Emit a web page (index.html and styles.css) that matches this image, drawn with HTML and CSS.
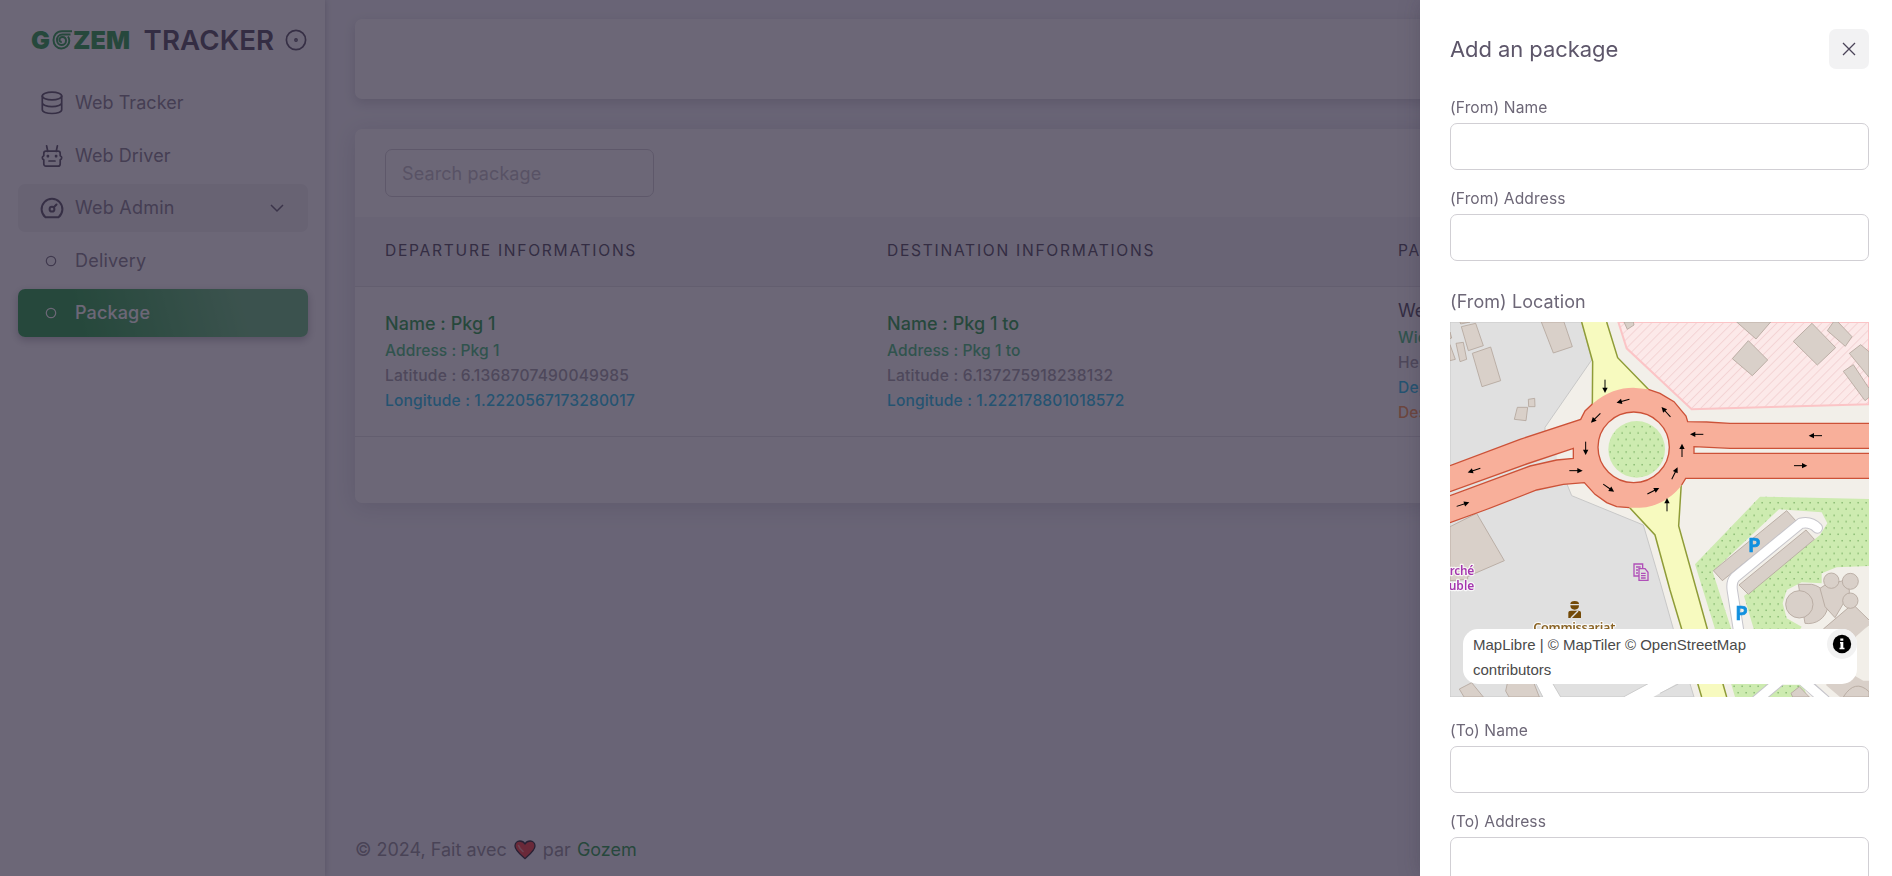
FILE: index.html
```html
<!DOCTYPE html>
<html lang="en">
<head>
<meta charset="utf-8">
<title>Gozem Tracker</title>
<link rel="stylesheet" href="styles.css">
</head>
<body>
<div class="app">
  <aside class="sidebar">
    <div class="brand">
      <svg class="brand-logo" width="104" height="40" viewBox="-2 -10 104 40">
        <g fill="#16983a" font-family="Inter, sans-serif" font-weight="900" font-size="25">
          <text x="0" y="18.6" textLength="19" lengthAdjust="spacingAndGlyphs">G</text>
          <text x="42" y="18.6" textLength="57" lengthAdjust="spacingAndGlyphs">ZEM</text>
        </g>
        <g fill="none" stroke="#16983a" stroke-width="2">
          <path d="M41 1.2H31C25.500 1.200 22.500 5.500 22.500 10c0 5 3.500 8.500 7.800 8.500s8-3.200 8-7.800c0-1.500-.4-3-1.300-4.200"/>
          <path d="M39.500 4.600H31.500c-3.500 0-5.500 2.700-5.500 5.400 0 2.900 2 5 4.500 5s4.500-1.900 4.500-4.300-1.700-3.700-3.600-3.700-3 1.400-2.900 3 1.300 2 2.300 1.700"/>
        </g>
      </svg>
      <span class="brand-text">TRACKER</span>
      <svg class="brand-pin" width="22" height="22" viewBox="0 0 22 22" fill="none" stroke="#4b4458"><circle cx="11" cy="11" r="9.600" stroke-width="1.700"/><circle cx="11" cy="11" r="1.200" stroke-width="1.400"/></svg>
    </div>
    <nav class="menu">
      <a class="item">
        <svg class="icon" viewBox="0 0 22 24"><ellipse cx="11" cy="5" rx="9.700" ry="3.800"/><path d="M1.300 5v13.800c0 2.100 4.300 3.700 9.700 3.700s9.700-1.600 9.700-3.700V5M1.300 11.800c0 2.200 4.300 3.900 9.700 3.900s9.700-1.700 9.700-3.900"/></svg>
        <span>Web Tracker</span>
      </a>
      <a class="item">
        <svg class="icon" viewBox="0 0 22 24"><path d="M6.800 7.500 5.600 1.800M15.200 7.500l1.200-5.700M5 7.200h12c1.400 0 2.200.9 2.200 2.200v2.400c1 .4 1.500 1.100 1.500 2s-.5 1.800-1.500 2.100v3.800c0 1.500-.8 2.500-2.200 2.500H5c-1.400 0-2.200-1-2.200-2.500v-3.800c-1-.3-1.500-1.200-1.500-2.100s.5-1.600 1.500-2V9.400c0-1.300.8-2.200 2.200-2.200zM8 17h6"/><path d="M6.300 11.500h1.200v1.200H6.300zM14.500 11.500h1.200v1.200h-1.200z" stroke-width="1.400"/></svg>
        <span>Web Driver</span>
      </a>
      <a class="item open">
        <svg class="icon gauge" viewBox="0 0 22 24"><path d="M4.500 21.300a10.400 10.400 0 1 1 13 0z"/><circle cx="11" cy="13.200" r="2.400"/><path d="M12.800 11.300l2.700-2.800"/></svg>
        <span class="wide">Web Admin</span>
        <svg class="chev" width="14" height="9" viewBox="0 0 14 9"><path d="M1 1l6 6 6-6"/></svg>
      </a>
      <a class="item">
        <svg class="dot" viewBox="0 0 12 12"><circle cx="6" cy="6" r="4.700"/></svg>
        <span class="wide">Delivery</span>
      </a>
      <a class="item active">
        <svg class="dot" viewBox="0 0 12 12"><circle cx="6" cy="6" r="4.700"/></svg>
        <span>Package</span>
      </a>
    </nav>
  </aside>

  <main class="main">
    <section class="card blank"></section>
    <section class="card list">
      <div class="toolbar"><input class="search" placeholder="Search package"></div>
      <div class="row head">
        <div>DEPARTURE INFORMATIONS</div>
        <div>DESTINATION INFORMATIONS</div>
        <div>PACKAGE INFORMATIONS</div>
      </div>
      <div class="row body">
        <div class="cell">
          <div class="name">Name : Pkg 1</div>
          <div class="line green">Address : Pkg 1</div>
          <div class="line grey">Latitude : 6.1368707490049985</div>
          <div class="line cyan">Longitude : 1.2220567173280017</div>
        </div>
        <div class="cell">
          <div class="name">Name : Pkg 1 to</div>
          <div class="line green">Address : Pkg 1 to</div>
          <div class="line grey">Latitude : 6.137275918238132</div>
          <div class="line cyan">Longitude : 1.222178801018572</div>
        </div>
        <div class="cell">
          <div class="name plain">Weight</div>
          <div class="line green">Width</div>
          <div class="line grey">Height</div>
          <div class="line cyan">Depth</div>
          <div class="line orange">Description</div>
        </div>
      </div>
    </section>
    <footer class="footer">
      <span>© 2024, Fait avec</span>
      <svg class="heart" width="22" height="20" viewBox="0 0 22 20"><path d="M11 18.600C7 15 1 10.500 1 6c0-3 2.200-5 4.800-5C8 1 10 2.300 11 4c1-1.700 3-3 5.200-3C18.800 1 21 3 21 6c0 4.500-6 9-10 12.600z" fill="#f8312f" stroke="#1a1320" stroke-width="1.300"/><path d="M4.500 5.500c.8 2.300 2.500 4.300 4.500 6" fill="none" stroke="#ff8b8b" stroke-width="1.600" stroke-linecap="round"/></svg>
      <span>par</span>
      <a class="link">Gozem</a>
    </footer>
  </main>
</div>

<div class="backdrop"></div>

<section class="drawer">
  <header class="drawer-head">
    <h5>Add an package</h5>
    <button class="close"><svg width="14" height="14" viewBox="0 0 14 14"><path d="M1 1l12 12M13 1L1 13"/></svg></button>
  </header>
  <div class="field"><label>(From) Name</label><input></div>
  <div class="field"><label>(From) Address</label><input></div>
  <div class="loc">(From) Location</div>
  <div class="map">
    <svg width="419" height="375" viewBox="30 36 1257 1125">
      <defs>
        <pattern id="hatch" width="19" height="19" patternUnits="userSpaceOnUse" patternTransform="rotate(45)"><path d="M1.500 0v19" stroke="#f3d3d4" stroke-width="3"/></pattern>
        <pattern id="dots" width="24" height="38" patternUnits="userSpaceOnUse"><path d="M4 8h5M16 27h5" stroke="#8fbf78" stroke-width="4"/></pattern>
        <g id="arr"><path d="M-20 0H8" stroke="#000" stroke-width="3"/><path d="M20 0L4-8V8z"/></g>
      </defs>
      <rect x="30" y="36" width="1257" height="1125" fill="#f2efe9"/>
      <path d="M30 36H425L455 150 315 352V400L350 435 380 520 395 557 610 645 660 815 700 957 762 1161H30z" fill="#e0e0e0" stroke="#c8c8c8" stroke-width="3"/>
      <path d="M535 36L560 115 755 298 1020 290 1287 283V36z" fill="#fce9e9"/>
      <path d="M535 36L560 115 755 298 1020 290 1287 283V36z" fill="url(#hatch)" stroke="#fbc4c6" stroke-width="6"/>
      <path d="M960 560L1287 567V768L1190 772 1145 790V820L1085 817 1040 840 1028 880 1040 925 1085 950 1060 990 1100 1161H885L825 957 765 763z" fill="#cdebb0"/>
      <path d="M960 560L1287 567V768L1190 772 1145 790V820L1085 817 1040 840 1028 880 1040 925 1085 950 1060 990 1100 1161H885L825 957 765 763z" fill="url(#dots)"/>
      <path d="M1017 598L1145 607 1162 640 1140 675 912 858 945 970H878L818 785z" fill="#f2efe9"/>
      <g fill="#d9d0c9" stroke="#b3a69c" stroke-width="2.500">
        <path d="M64 50L107 40 130 107 85 122zM97 130L152 111 182 212 126 230zM48 100L70 97 80 148 60 155zM30 104L46 148 30 152zM30 66L35 84 30 86zM60 36L62 42 90 36zM304 36H372L397 110 340 129zM232 292L263 292 258 332 223 328zM265 268L284 265 285 290 266 290z"/>
        <path d="M552 36L562 58 582 45 580 36zM890 36L948 87 992 36zM925 92L983 150 937 197 877 146zM1116 40L1187 113 1132 165 1060 94zM1180 36L1162 62 1216 109 1236 80 1194 36zM1262 104L1228 130 1287 202V125zM1210 184L1240 164 1287 235V262L1275 272z"/>
        <path d="M110 610L193 752 105 790 83 800V808L30 812V650zM58 1137L95 1118 130 1161H72zM202 1120H282L298 1161H207L197 1143z"/>
        <path d="M820 782L1040 602 1068 633 847 812zM897 825L1098 660 1123 688 925 853z"/>
        <path d="M1075 823H1115A57 57 0 1 1 1095 940z"/><circle cx="1078" cy="883" r="41"/>
        <path d="M1140 835L1155 825 1210 812 1228 840V850L1185 923 1155 890z"/>
        <path d="M1150 957L1235 885 1287 932V1161H1150L1160 1120H1140V957z" stroke="none"/>
        <path d="M1150 957L1238 882 1287 930M1287 945Q1265 965 1275 990"/>
        <circle cx="1174" cy="812" r="23"/><circle cx="1231" cy="814" r="24"/><circle cx="1231" cy="872" r="23"/>
      </g>
      <path d="M1247 980L1287 945V1112L1270 1112 1240 1095z" fill="#f2efe9"/>
      <path d="M1210 1161Q1245 1105 1287 1145V1161z" fill="#d9d0c9" stroke="#b3a69c" stroke-width="2.500"/>
      <path d="M1100 1110H1140L1200 1161H1110z" fill="#f2efe9"/>
      <g fill="none" stroke-linejoin="round" stroke-linecap="round">
        <path d="M1132 654Q1112 633 1082 640L885 802Q873 815 877 842L895 957" stroke="#c6c5cb" stroke-width="34"/>
        <path d="M1132 654Q1112 633 1082 640L885 802Q873 815 877 842L895 957" stroke="#fff" stroke-width="28"/>
        <path d="M950 1171L1022 1110M1085 1108L1155 1171" stroke="#c6c5cb" stroke-width="34"/>
        <path d="M950 1171L1022 1110H1085L1155 1171" stroke="#fff" stroke-width="28"/>
      </g>
      <path d="M1053 1150L1078 1130 1108 1161H1058z" fill="#d9d0c9" stroke="#b3a69c" stroke-width="2.500"/>
      <path d="M285 1115H335L362 1161H310zM550 1161L630 1118H715L640 1161z" fill="#fff"/>
      <path d="M308 1161L285 1115M362 1161L335 1115M550 1161L630 1118M660 1150L715 1122" stroke="#ccc" stroke-width="3"/>
      <path d="M425 36L458 155 457 310 580 400 700 330 625 238 533 143 500 36zM568 592L645 675 690 840 725 957 785 1161H860L802 957 716 648 722 530 700 500z" fill="#f7fabf"/>
      <path d="M425 36L458 155 457 285M500 36L533 143 625 238M560 584L568 592 645 675 690 840 725 957 785 1161M860 1161L802 957 716 648 724 520" fill="none" stroke="#8f9c38" stroke-width="4.500"/>
      <path d="M30 467L240 388 422 328 435 303 457 282C500 245 540 233 580 233L625 238 660 250 702 275 738 318 743 335 870 340H1287V505H737L725 525C700 560 650 593 600 593L568 593 530 590 500 578 465 553 433 518 370 523 290 540 135 600 30 638z" fill="#f8af9a"/>
      <path d="M30 545L260 462 400 415V445L350 450 270 468 30 557z" fill="#e4e2e0"/>
      <path d="M350 432L400 415V445L350 450zM762 410L870 415H1287V430H762z" fill="#f2efe9"/>
      <ellipse cx="581" cy="412" rx="107" ry="106" fill="#f2efe9"/>
      <circle cx="590" cy="418" r="85" fill="#cdebb0"/><circle cx="590" cy="418" r="83" fill="url(#dots)"/>
      <g fill="none" stroke="#cc5238" stroke-width="4">
        <path d="M30 467L240 388 422 328 435 303 457 282M625 238L660 250 702 275 738 318 743 335 800 336 870 340H1287M1287 505H737L725 525M568 593L530 590 500 578 465 553 433 518 370 523 290 540 135 600 30 638M30 545L260 462 400 415V445L350 450 270 468 30 557M1287 415H870L762 410V430H1287"/>
        <ellipse cx="581" cy="412" rx="107" ry="106"/>
      </g>
      <g fill="#000">
        <use href="#arr" transform="translate(495 229) rotate(90)"/>
        <use href="#arr" transform="translate(549 273) rotate(165)"/>
        <use href="#arr" transform="translate(467 324) rotate(135)"/>
        <use href="#arr" transform="translate(437 415) rotate(90)"/>
        <use href="#arr" transform="translate(408 482)"/>
        <use href="#arr" transform="translate(102 481) rotate(162)"/>
        <use href="#arr" transform="translate(69 583) rotate(-18)"/>
        <use href="#arr" transform="translate(506 534) rotate(35)"/>
        <use href="#arr" transform="translate(640 543) rotate(-27)"/>
        <use href="#arr" transform="translate(681 584) rotate(-90)"/>
        <use href="#arr" transform="translate(704 490) rotate(-64)"/>
        <use href="#arr" transform="translate(726 421) rotate(-90)"/>
        <use href="#arr" transform="translate(678 306) rotate(-132)"/>
        <use href="#arr" transform="translate(770 373) rotate(180)"/>
        <use href="#arr" transform="translate(1126 377) rotate(180)"/>
        <use href="#arr" transform="translate(1082 467)"/>
      </g>
      <g fill="none" stroke="#b04fb8" stroke-width="4"><path d="M596 798H582V762H608V776M588 771H602M588 780H594M588 789H594M597 776H615L624 787V811H597zM603 790H617M603 797H617M603 804H617"/></g>
      <g fill="#734a08"><path d="M391 882Q391 873 404 873T417 882zM391 886H417Q417 899 404 899T391 886zM385 924V909Q385 902 393 902H415Q423 902 423 909V924z"/><path d="M393 924L414 903" stroke="#e0e0e0" stroke-width="4"/></g>
      <g font-family="Noto Sans, sans-serif" paint-order="stroke" stroke="#fff" stroke-opacity=".8" stroke-width="7" stroke-linejoin="round">
        <g fill="#a436ae" font-size="36" font-weight="600" text-anchor="end"><text x="103" y="795" textLength="74">rché</text><text x="103" y="840" textLength="77">uble</text></g>
        <text x="403" y="965" text-anchor="middle" textLength="246" fill="#8a6324" font-size="38" font-weight="600">Commissariat</text>
      </g>
      <g fill="#1190df" stroke="#1190df" stroke-width="2" font-family="Noto Sans, sans-serif" font-weight="600" font-size="61"><text x="924" y="727">P</text><text x="886" y="931">P</text></g>
    </svg>
    <div class="attrib">
      <p>MapLibre | © MapTiler © OpenStreetMap contributors</p>
      <svg width="30" height="30" viewBox="0 0 30 30"><circle cx="15" cy="15" r="15" fill="#f2f2f2"/><circle cx="15" cy="15" r="9.200"/><path d="M13 13h3.300v5.700h1.200v1.500h-5v-1.500h1V14.500H13zM13.300 9.500h3v2.200h-3z" fill="#fff"/></svg>
    </div>
  </div>
  <div class="field"><label>(To) Name</label><input></div>
  <div class="field"><label>(To) Address</label><input></div>
</section>
</body>
</html>
```
FILE: styles.css
```css
* { box-sizing: border-box; }
html, body { height: 100%; margin: 0; overflow: hidden; }
body { background: #f4f5fa; color: #6d6777; font: 18px/28px Inter, "Open Sans", sans-serif; }
.app { display: flex; height: 876px; }

.sidebar { width: 325px; flex: none; background: #fff; padding: 0 17px 0 18px; box-shadow: 0 0 6px rgba(46,38,61,.3); }
.brand { height: 79px; display: flex; align-items: center; padding-left: 11px; }
.brand-text { margin-left: 10.500px; width: 131px; font-size: 27.700px; font-weight: 600; letter-spacing: .1px; color: #433c50; white-space: nowrap; }
.brand-pin { margin-left: 10px; flex: none; }
.brand-logo { flex: none; }
.menu { display: flex; flex-direction: column; gap: 4.500px; }
.item { display: flex; align-items: center; height: 48px; border-radius: 7px; padding: 0 24.500px 0 23px; color: #7c7686; letter-spacing: .07px; }
.item .icon { width: 22px; height: 24px; margin-right: 12px; fill: none; stroke: #4b4458; stroke-width: 1.700; stroke-linejoin: round; stroke-linecap: round; }
.item .gauge { stroke-width: 2; overflow: visible; }
.item .dot { width: 12px; height: 12px; margin: 0 18px 0 4px; fill: none; stroke: #6d6777; stroke-width: 1.200; }
.item .wide { letter-spacing: .22px; }
.item.open { background: #f0f0f2; }
.item .chev { margin-left: auto; fill: none; stroke: #5c5568; stroke-width: 1.500; }
.item.active { background: linear-gradient(75deg, #16983a 22%, #5cb975 77%); color: #fff; font-weight: 500; box-shadow: 0 3px 8px rgba(46,38,61,.35); letter-spacing: .15px; }
.item.active .dot { stroke: #fff; }

.main { flex: 1; min-width: 0; padding: 19px 30px 0; display: flex; flex-direction: column; }
.card { background: #fff; border-radius: 7px; box-shadow: 0 4px 12px rgba(46,38,61,.2); flex: none; }
.blank { height: 80px; margin-bottom: 30px; }
.list { height: 374px; box-shadow: 0 4px 22px rgba(46,38,61,.16); }
.toolbar { height: 88px; padding: 20px 30px; }
.search { width: 269px; height: 48px; border: 1px solid #cfcdd3; border-radius: 7px; padding: 0 16px; font: 18px Inter, sans-serif; letter-spacing: .1px; background: none; }
.search::placeholder { color: #bdbac2; opacity: 1; }
.row { display: grid; grid-template-columns: 502px 511px 1fr; padding: 0 0 0 30px; border-bottom: 1px solid #e0dfe4; }
.head { height: 70px; background: #f4f4f7; color: #433c50; font-size: 15.600px; line-height: 67.500px; letter-spacing: 1.720px; white-space: nowrap; overflow: hidden; }
.body { height: 150px; align-items: center; white-space: nowrap; overflow: hidden; }
.cell { padding-bottom: 1px; }
.name { height: 28px; line-height: 28px; color: #16983a; font-weight: 500; letter-spacing: .03px; }
.name.plain { color: #433c50; font-weight: 400; }
.line { height: 25px; line-height: 25px; font-size: 15.600px; font-weight: 500; }
.green { color: #38bd74; letter-spacing: .06px; }
.grey { color: #9a96a1; letter-spacing: .21px; }
.cyan { color: #10bdea; letter-spacing: .13px; }
.orange { color: #ff9145; }
.footer { margin-top: auto; height: 52px; display: flex; align-items: center; color: #8b8792; }
.heart { margin: 0 7px; }
.link { color: #16983a; margin-left: 6px; }

.backdrop { position: fixed; inset: 0; background: rgba(46,38,61,.7); }

.drawer { position: fixed; top: 0; right: 0; width: 472px; height: 876px; overflow: hidden; background: #fff; padding: 29px 23px 0 30px; color: #6d6777; box-shadow: 0 0 20px rgba(46,38,61,.25); }
.drawer-head { display: flex; justify-content: space-between; align-items: center; height: 40px; margin-bottom: 26px; }
h5 { margin: 0; font-size: 22px; font-weight: 400; letter-spacing: -.07px; color: #5d566a; }
.close { width: 40px; height: 40px; border: 0; border-radius: 7px; background: #f2f2f3; padding: 0; display: flex; align-items: center; justify-content: center; }
.close path { stroke: #4b4458; stroke-width: 1.300; }
.field { height: 91px; }
.field label { display: block; height: 28px; line-height: 25px; font-size: 15.600px; letter-spacing: .1px; color: #6d6777; }
.field input { display: block; width: 419px; height: 47px; border: 1px solid #d1cfd4; border-radius: 7px; background: #fff; }
.loc { height: 45px; line-height: 49px; letter-spacing: .08px; }
.map { position: relative; width: 419px; height: 375px; overflow: hidden; margin: 0 0 21px; }
.map > svg { display: block; }
.attrib { position: absolute; left: 13px; bottom: 13px; width: 394px; height: 55px; border-radius: 15px; background: #fff; padding: 3px 0 0 10px; font: 15px/25px "Liberation Sans", sans-serif; color: #4a4a4a; }
.attrib p { margin: 0; width: 340px; }
.attrib svg { position: absolute; right: 0; top: 0; }
```
